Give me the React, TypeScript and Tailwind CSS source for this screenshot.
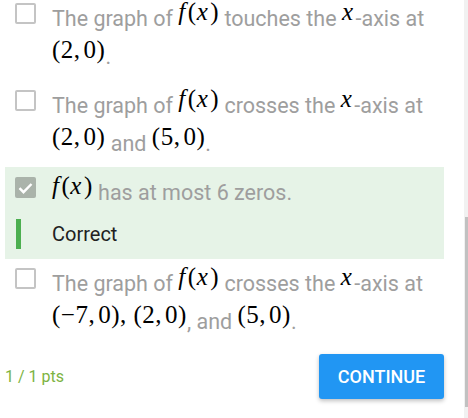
import type { ReactNode } from "react";

const M = ({ children }: { children: ReactNode }) => (
	<span className="align-[6px] font-['Liberation_Serif',serif] text-[25px] leading-none tracking-[0.5px] text-black">
		{children}
	</span>
);

const I = ({ children }: { children: ReactNode }) => <i className="pr-[2px]">{children}</i>;

// coordinate pair, thin comma spacing like typeset math
const P = ({ a, b }: { a: string; b: string }) => (
	<>
		({a},<span className="pl-[3px]">{b}</span>)
	</>
);

const Fx = () => (
	<M>
		<I>f</I>(<I>x</I>)
	</M>
);

const Box = ({ checked }: { checked?: boolean }) =>
	checked ? (
		<span className="flex h-[21px] w-[21px] items-center justify-center rounded-[2px] bg-[#aab3aa]">
			<svg width="15" height="12" viewBox="0 0 15 12" fill="none">
				<path d="M1.5 6.2l4 4L13.5 2" stroke="white" strokeWidth="2.4" />
			</svg>
		</span>
	) : (
		<span className="block h-[21px] w-[21px] rounded-[2px] border-2 border-[#c4c4c4] bg-white" />
	);

const Option = ({ children, checked }: { children: ReactNode; checked?: boolean }) => (
	<div className="flex gap-[16px] pl-[10px]">
		<div className="shrink-0 pt-[4px]">
			<Box checked={checked} />
		</div>
		<p className="text-[21.5px] leading-[36px] text-[#9e9e9e]">{children}</p>
	</div>
);

export default function App() {
	return (
		<div className="flex h-[418px] w-[468px] overflow-hidden bg-white font-['Roboto',sans-serif]">
			<div className="flex w-[464px] flex-col pl-[5px] pr-[20px]">
				<div className="-mt-[1px] pb-[11px]">
					<Option>
						The graph of <Fx /> touches the{" "}
						<M>
							<I>x</I>
						</M>
						-axis at{" "}
						<M>
							<P a="2" b="0" />
						</M>
						.
					</Option>
				</div>
				<div className="pb-[5px]">
					<Option>
						The graph of <Fx /> crosses the{" "}
						<M>
							<I>x</I>
						</M>
						-axis at{" "}
						<M>
							<P a="2" b="0" />
						</M>{" "}
						and{" "}
						<M>
							<P a="5" b="0" />
						</M>
						.
					</Option>
				</div>
				<div className="bg-[#e6f3e7] pb-[10px] pt-[6px]">
					<Option checked>
						<Fx /> has at most 6 zeros.
					</Option>
					<div className="mt-[8px] flex items-center gap-[31px] pl-[11px]">
						<span className="h-[30px] w-[5px] bg-[#4caf50]" />
						<span className="text-[20px] text-[#212121]">Correct</span>
					</div>
				</div>
				<div className="pt-[5px]">
					<Option>
						The graph of <Fx /> crosses the{" "}
						<M>
							<I>x</I>
						</M>
						-axis at{" "}
						<M>
							<P a="−7" b="0" />, <P a="2" b="0" />
						</M>
						, and{" "}
						<M>
							<P a="5" b="0" />
						</M>
						.
					</Option>
				</div>
				<div className="mt-[14px] flex items-center justify-between">
					<span className="text-[16px] text-[#7cb342]">1 / 1 pts</span>
					<button className="h-[45px] w-[125px] rounded-[3px] bg-[#2196f3] text-[18px] font-medium text-white shadow-[0_2px_4px_rgba(0,0,0,0.25)]">
						CONTINUE
					</button>
				</div>
			</div>
			<div className="flex w-[4px] flex-col bg-[#f1f1f1]">
				<div className="h-[217px]" />
				<div className="ml-[1px] h-[190px] bg-[#c1c1c1]" />
			</div>
		</div>
	);
}
